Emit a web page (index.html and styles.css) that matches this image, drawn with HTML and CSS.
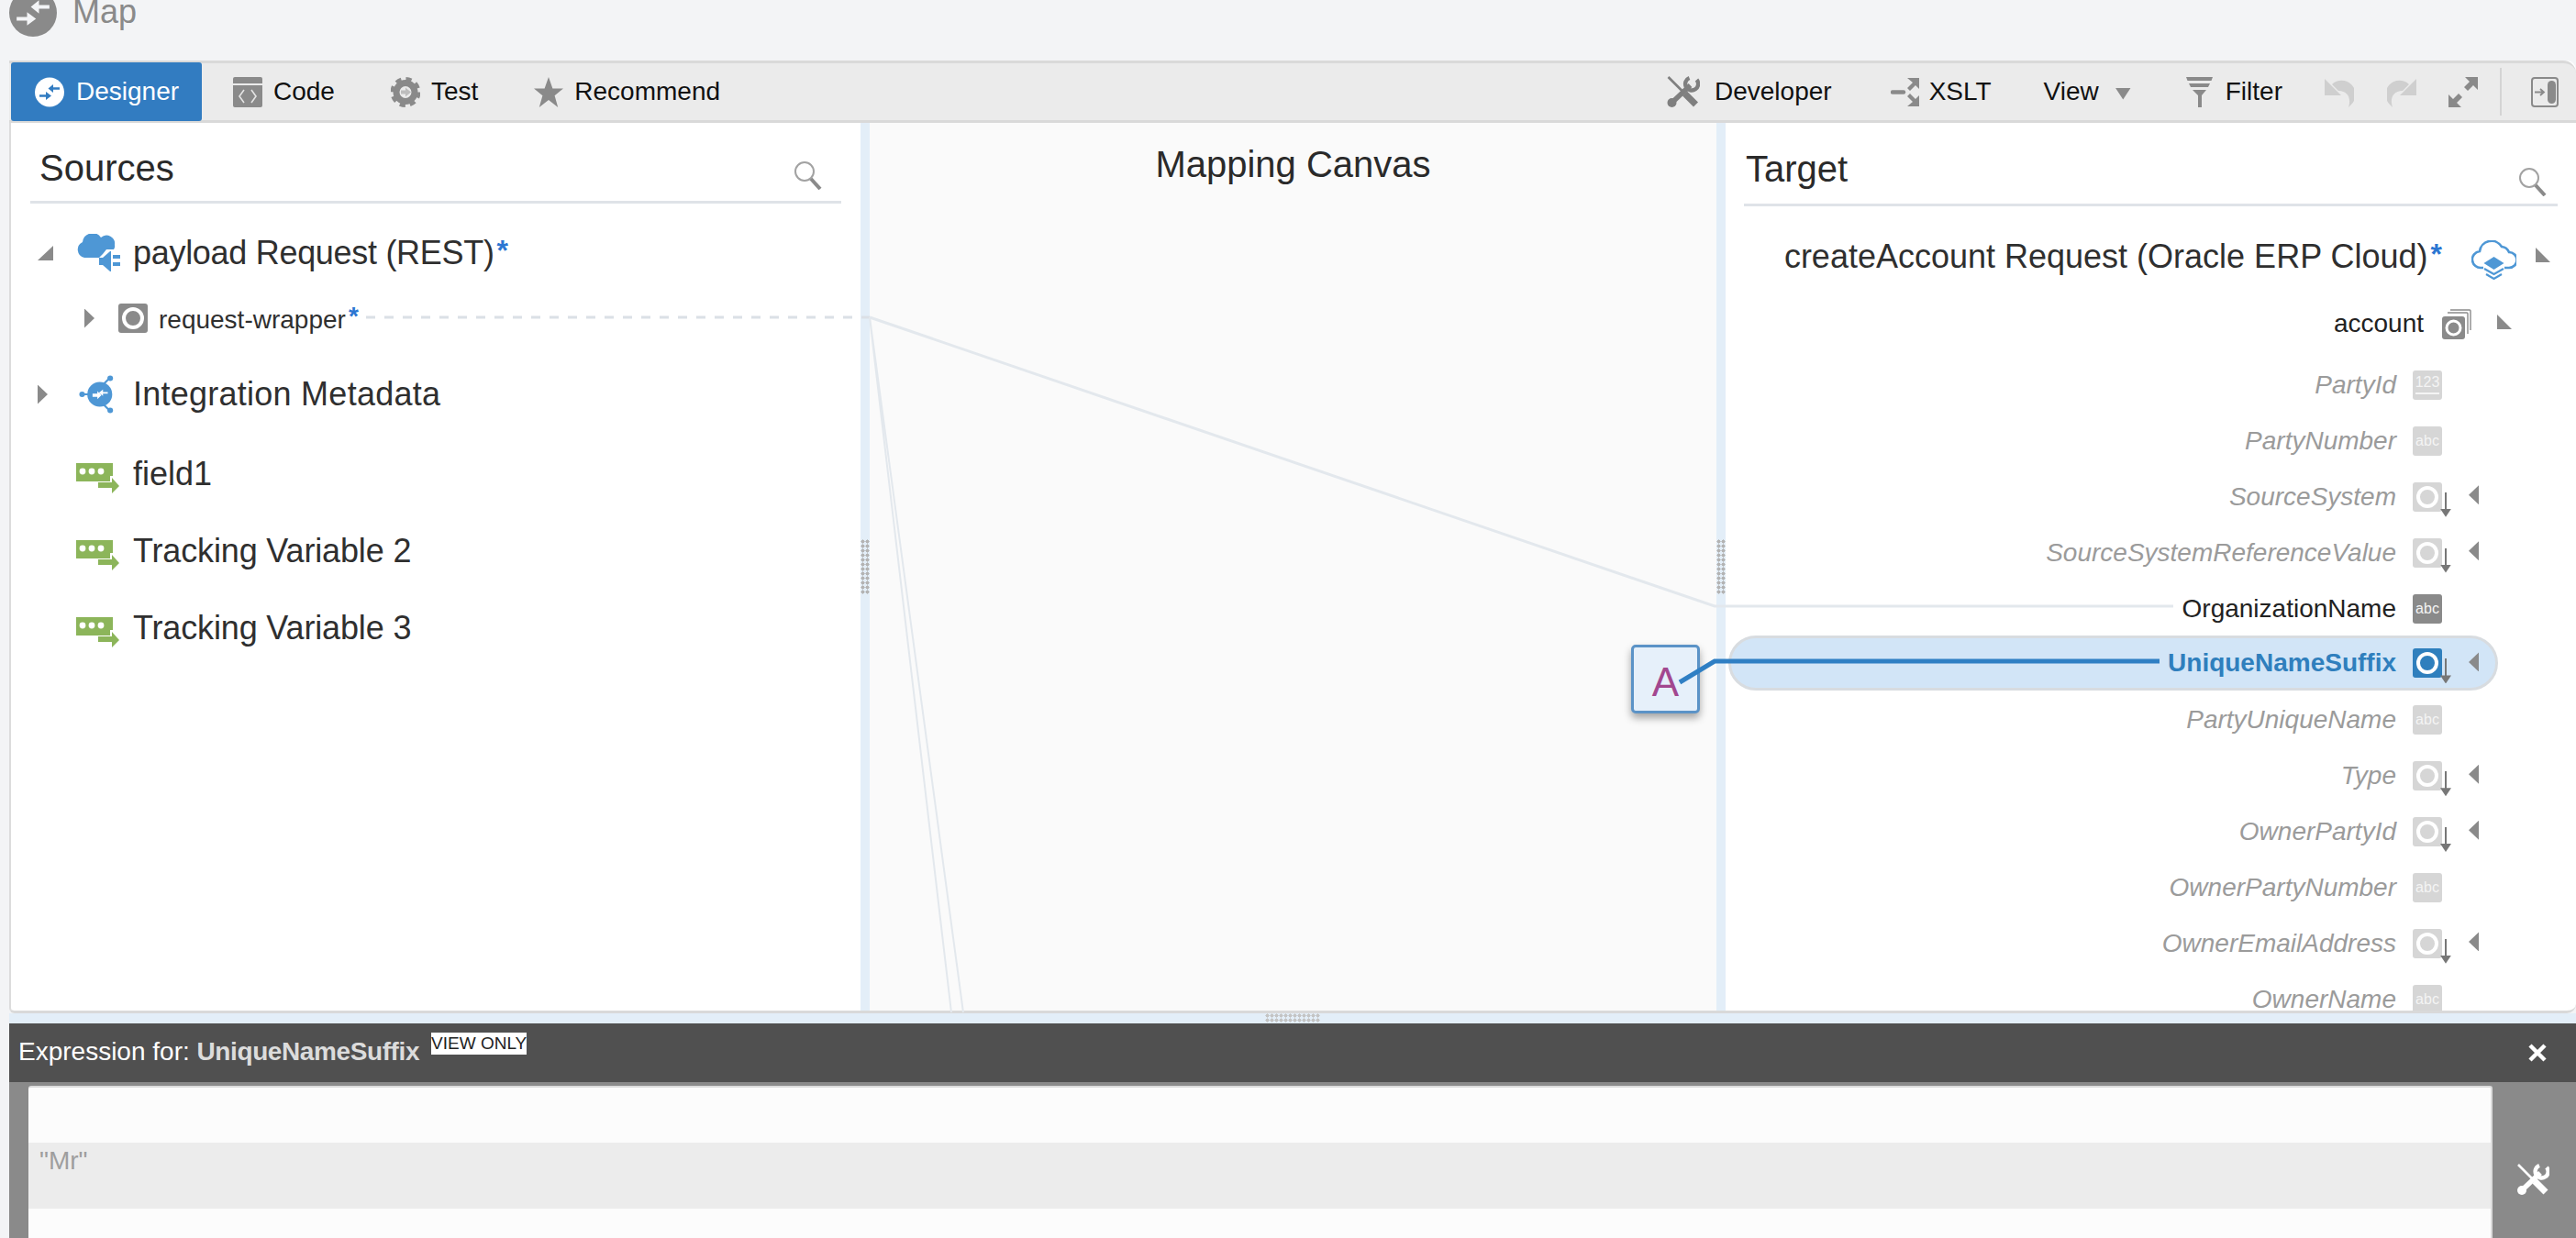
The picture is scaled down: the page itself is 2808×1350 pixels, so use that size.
FILE: index.html
```html
<!DOCTYPE html>
<html lang="en">
  <head>
    <meta charset="UTF-8" />
    <title>Map</title>
    <link rel="stylesheet" href="styles.css">
  </head>
  <body>
    <!-- shared icons -->
    <svg class="icon-defs" aria-hidden="true">
      <defs>
        <symbol id="ic-map" viewBox="0 0 32 32">
          <circle cx="16" cy="16" r="16" fill="currentColor" />
          <path class="ic-cut" d="M5 20h8M27 12h-8" fill="none" stroke-width="2.400" />
          <path class="ic-cut-fill" d="M12 15.500l6 4.500-6 4.500zM20 7.500v9L14.500 12z" />
        </symbol>
        <symbol id="ic-tools" viewBox="0 0 36 36">
          <path d="M2 2l18 18" stroke="currentColor" stroke-width="2.600" fill="none" />
          <path d="M20 20l12 12" stroke="currentColor" stroke-width="7" fill="none" />
          <path d="M26 11L7 29" stroke="currentColor" stroke-width="5.500" fill="none" />
          <circle cx="6" cy="30" r="5" fill="currentColor" />
          <path d="M33 5a7 7 0 1 1-8-2" stroke="currentColor" stroke-width="4.400" fill="none" />
        </symbol>
        <symbol id="ic-search" viewBox="0 0 32 32">
          <circle cx="12" cy="12" r="10" fill="none" stroke="#a2a2a2" stroke-width="2" />
          <path d="M19 20l10 11" stroke="#8a8a8a" stroke-width="4" />
        </symbol>
        <symbol id="ic-var" viewBox="0 0 48 33">
          <path d="M0 0h40v20H0z" fill="#8cb55a" />
          <circle cx="7" cy="9" r="3.400" fill="#fff" />
          <circle cx="17" cy="9" r="3.400" fill="#fff" />
          <circle cx="27" cy="9" r="3.400" fill="#fff" />
          <path d="M20 20h17v-6h3l8 11-8 8h-3v-6H20z" fill="#fff" />
          <path d="M24 21h15v-5l8 9-8 8v-6H24z" fill="#8cb55a" />
        </symbol>
      </defs>
    </svg>

    <div class="page">
      <header class="page-title">
        <svg class="title-icon"><use href="#ic-map" /></svg>
        <span>Map</span>
      </header>

      <main class="panel">
        <div class="toolbar">
          <div class="tb-tab">
            <svg class="tb-ic"><use href="#ic-map" /></svg>
            <span>Designer</span>
          </div>
          <div class="tb-item tb-code">
            <svg class="tb-ic" viewBox="0 0 32 33">
              <rect width="32" height="33" rx="2" fill="#8a8a8a" />
              <path d="M0 8h32" stroke="#ebebeb" stroke-width="2" />
              <path d="M12 14l-5 7 5 7M20 14l5 7-5 7" fill="none" stroke="#e4e4e4" stroke-width="1.600" />
            </svg>
            <span>Code</span>
          </div>
          <div class="tb-item tb-test">
            <svg class="tb-ic" viewBox="0 0 32 33">
              <circle cx="16" cy="16.500" r="10" fill="none" stroke="#8a8a8a" stroke-width="7" />
              <circle cx="16" cy="16.500" r="14" fill="none" stroke="#8a8a8a" stroke-width="5" stroke-dasharray="6 5" />
              <path d="M11 14.500h5v-3l6 5-6 5v-3h-5z" fill="#bdbdbd" />
            </svg>
            <span>Test</span>
          </div>
          <div class="tb-item tb-rec">
            <svg class="tb-ic" viewBox="0 0 32 33">
              <path d="M16 0l4.400 12.400H32l-9.400 7.800L26.200 33 16 25 5.800 33l3.600-12.800L0 12.400h11.600z" fill="#8a8a8a" />
            </svg>
            <span>Recommend</span>
          </div>

          <div class="tb-right">
            <div class="tb-item">
              <svg class="tb-ic-tools"><use href="#ic-tools" /></svg>
              <span>Developer</span>
            </div>
            <div class="tb-item tb-xslt">
              <svg class="tb-ic tb-ic-xslt" viewBox="0 0 31 33">
                <path d="M2 16.500h12" stroke="#8a8a8a" stroke-width="4.500" stroke-linecap="round" />
                <path d="M18 1h13v12l-4-4-6 6-3-3 6-6zM18 32h13V20l-4 4-6-6-3 3 6 6z" fill="#8a8a8a" />
              </svg>
              <span>XSLT</span>
            </div>
            <div class="tb-item tb-view">
              <span>View</span>
              <i class="view-caret"></i>
            </div>
            <div class="tb-item tb-filter">
              <svg class="tb-ic tb-ic-filter" viewBox="0 0 29 33">
                <path d="M0 0h29l-1.500 4H1.500zM3 7h23l-2 4H5zM7 14h15l-5 6v13h-4V20z" fill="#8a8a8a" />
              </svg>
              <span>Filter</span>
            </div>
            <svg class="tb-btn tb-undo" viewBox="0 0 32 33">
              <path d="M0 2v18h18z" fill="#cfcfcf" />
              <path d="M8 8a15 15 0 0 1 21 22l-3 3c3-9 0-18-11-18z" fill="#cfcfcf" />
            </svg>
            <svg class="tb-btn tb-redo" viewBox="0 0 32 33">
              <path d="M32 2v18H14z" fill="#cfcfcf" />
              <path d="M24 8A15 15 0 0 0 3 30l3 3c-3-9 0-18 11-18z" fill="#cfcfcf" />
            </svg>
            <svg class="tb-btn tb-expand" viewBox="0 0 32 33">
              <path d="M32 0v14l-5-5-6 6-4-4 6-6-5-5zM0 33V19l5 5 6-6 4 4-6 6 5 5z" fill="#8a8a8a" />
            </svg>
            <i class="tb-sep"></i>
            <svg class="tb-btn tb-panel" viewBox="0 0 30 33">
              <rect x="1" y="1" width="28" height="31" rx="3" fill="none" stroke="#8a8a8a" stroke-width="2" />
              <rect x="18" y="4" width="9" height="25" rx="4.500" fill="#8a8a8a" />
              <path d="M4 16.500h9M10 13l4 3.500-4 3.500" fill="none" stroke="#8a8a8a" stroke-width="1.800" />
            </svg>
          </div>
        </div>

        <div class="mapper">
          <section class="sources">
            <div class="pane-head">
              <h2>Sources</h2>
              <svg class="search-ic"><use href="#ic-search" /></svg>
            </div>
            <div class="tree">
              <div class="tree-row">
                <span class="caret-slot"><i class="caret caret-down-left"></i></span>
                <svg class="tree-ic" viewBox="0 0 48 42">
                  <path d="M9 26a9 9 0 0 1-2-17A11 11 0 0 1 27 4a9 9 0 0 1 15 8 6 6 0 0 1-1 5h-8l-4 5-4 4z" fill="#4e97d5" />
                  <path d="M25 26h4l8-7h1v22h-1l-8-7h-4z" fill="#4e97d5" />
                  <path d="M40 25h8M40 33h8" stroke="#4e97d5" stroke-width="4" />
                </svg>
                <span class="tree-label tight">payload Request (REST)<b class="star">*</b></span>
              </div>
              <div class="tree-row sub">
                <span class="caret-slot"><i class="caret caret-right"></i></span>
                <span class="node dark"><i class="ring"></i></span>
                <span class="tree-label small">request-wrapper<b class="star">*</b></span>
              </div>
              <div class="tree-row meta">
                <span class="caret-slot"><i class="caret caret-right"></i></span>
                <svg class="tree-ic" viewBox="0 0 48 48">
                  <path d="M5 24h10M30 12l10-10M30 36l10 10" stroke="#4e97d5" stroke-width="2.500" />
                  <circle cx="4" cy="24" r="3.500" fill="#4e97d5" />
                  <circle cx="39" cy="4" r="3.500" fill="#4e97d5" />
                  <circle cx="39" cy="44" r="3.500" fill="#4e97d5" />
                  <circle cx="26" cy="24" r="15.500" fill="#4e97d5" />
                  <path d="M17 23h6v-3l5 5-5 5v-3h-6zM36 21h-6v-3l-5 4 5 4v-3h6z" fill="#fff" />
                </svg>
                <span class="tree-label wide">Integration Metadata</span>
              </div>
              <div class="tree-row">
                <span class="caret-slot"></span>
                <svg class="tree-ic var-ic"><use href="#ic-var" /></svg>
                <span class="tree-label">field1</span>
              </div>
              <div class="tree-row">
                <span class="caret-slot"></span>
                <svg class="tree-ic var-ic"><use href="#ic-var" /></svg>
                <span class="tree-label tracking">Tracking Variable 2</span>
              </div>
              <div class="tree-row">
                <span class="caret-slot"></span>
                <svg class="tree-ic var-ic"><use href="#ic-var" /></svg>
                <span class="tree-label tracking">Tracking Variable 3</span>
              </div>
            </div>
          </section>

          <div class="splitter"><i class="grip"></i></div>

          <section class="canvas">
            <h2>Mapping Canvas</h2>
          </section>

          <div class="splitter"><i class="grip"></i></div>

          <section class="target">
            <div class="pane-head target-head">
              <h2>Target</h2>
              <svg class="search-ic"><use href="#ic-search" /></svg>
            </div>
            <div class="target-root">
              <span class="tree-label">createAccount Request (Oracle ERP Cloud)<b class="star">*</b></span>
              <svg class="root-ic" viewBox="0 0 49 43">
                <path d="M13 30H11a9 9 0 0 1-2-18 13 13 0 0 1 24-5 10 10 0 0 1 8 6 8 8 0 0 1 0 17h-5" fill="none" stroke="#4e97d5" stroke-width="2.600" />
                <path d="M24.500 18l11 7-11 7-11-7z" fill="#4e97d5" />
                <path d="M14 31l10.500 6 10.500-6M16 37l8.500 5 8.500-5" fill="none" stroke="#4e97d5" stroke-width="2.200" />
              </svg>
              <i class="caret caret-down-right"></i>
            </div>
            <div class="target-group">
              <span class="tree-label small">account</span>
              <span class="stack-ic">
                <svg viewBox="0 0 32 33" width="32" height="33">
                  <path d="M9 1h21a1 1 0 0 1 1 1v21M6 4h21a1 1 0 0 1 1 1v22" fill="none" stroke="#8a8a8a" stroke-width="1.400" />
                  <rect y="8" width="25" height="25" rx="3" fill="#8a8a8a" />
                  <circle cx="12.500" cy="20.500" r="7.500" fill="none" stroke="#fff" stroke-width="3" />
                </svg>
              </span>
              <i class="caret caret-down-right"></i>
            </div>
            <div class="fields">
              <div class="field">
                <span class="field-name">PartyId</span>
                <span class="node"><span class="num">123</span></span>
              </div>
              <div class="field">
                <span class="field-name">PartyNumber</span>
                <span class="node">abc</span>
              </div>
              <div class="field">
                <span class="field-name">SourceSystem</span>
                <span class="node"><i class="ring"></i><i class="down"></i></span>
                <i class="caret caret-left"></i>
              </div>
              <div class="field">
                <span class="field-name">SourceSystemReferenceValue</span>
                <span class="node"><i class="ring"></i><i class="down"></i></span>
                <i class="caret caret-left"></i>
              </div>
              <div class="field mapped">
                <span class="field-name">OrganizationName</span>
                <span class="node dark">abc</span>
              </div>
              <div class="field selected">
                <span class="field-name">UniqueNameSuffix</span>
                <span class="node blue"><i class="ring"></i><i class="down"></i></span>
                <i class="caret caret-left"></i>
              </div>
              <div class="field">
                <span class="field-name">PartyUniqueName</span>
                <span class="node">abc</span>
              </div>
              <div class="field">
                <span class="field-name">Type</span>
                <span class="node"><i class="ring"></i><i class="down"></i></span>
                <i class="caret caret-left"></i>
              </div>
              <div class="field">
                <span class="field-name">OwnerPartyId</span>
                <span class="node"><i class="ring"></i><i class="down"></i></span>
                <i class="caret caret-left"></i>
              </div>
              <div class="field">
                <span class="field-name">OwnerPartyNumber</span>
                <span class="node">abc</span>
              </div>
              <div class="field">
                <span class="field-name">OwnerEmailAddress</span>
                <span class="node"><i class="ring"></i><i class="down"></i></span>
                <i class="caret caret-left"></i>
              </div>
              <div class="field">
                <span class="field-name">OwnerName</span>
                <span class="node">abc</span>
              </div>
            </div>
          </section>
        </div>
      </main>

      <div class="h-splitter"><i class="grip-h"></i></div>

      <section class="expr">
        <div class="expr-head">
          <span class="expr-title">Expression for: <b>UniqueNameSuffix</b></span>
          <span class="view-only">VIEW ONLY</span>
          <svg class="expr-close" viewBox="0 0 20 20">
            <path d="M2 2l16 16M18 2L2 18" stroke="#fff" stroke-width="4.500" />
          </svg>
        </div>
        <div class="expr-body">
          <div class="editor">
            <div class="editor-line">"Mr"</div>
          </div>
          <div class="expr-side">
            <svg class="expr-tools"><use href="#ic-tools" /></svg>
          </div>
        </div>
      </section>

      <!-- mapping node and wires lie over the panes -->
      <div class="fn-node">A</div>
      <svg class="wires" viewBox="0 0 2808 1350">
        <path class="wire-dash" d="M399 346H948" />
        <path class="wire" d="M948 346L1869 661H2369" />
        <path class="wire wire-thin" d="M948 346L1037 1104M948 346L1050 1104" />
        <path class="wire-on" d="M1831 744L1869 721H2354" />
      </svg>
    </div>
  </body>
</html>
```

FILE: styles.css
```css
* {
  box-sizing: border-box;
}

html,
body {
  margin: 0;
  height: 100%;
  overflow: hidden;
}

body {
  background-color: #f3f4f6;
  color: #2f2f2f;
  font-family: "Liberation Sans", Arial, sans-serif;
}

h2 {
  margin: 0;
  font-size: 40px;
  font-weight: normal;
}

i {
  display: block;
}

.icon-defs {
  position: absolute;
  width: 0;
  height: 0;
}

.page {
  position: relative;
  display: flex;
  flex-direction: column;
  height: 1350px;
}

/* Title */
.page-title {
  height: 66px;
  flex: none;
  display: flex;
  align-items: flex-start;
  padding-left: 10px;
  color: #8a8a8a;
  font-size: 36px;
  overflow: hidden;
}

.title-icon {
  width: 52px;
  height: 52px;
  margin-top: -12px;
  margin-right: 17px;
  color: #8a8a8a;
  --cut: #f3f4f6;
}

.page-title span {
  margin-top: -12px;
  line-height: 50px;
}

.ic-cut {
  stroke: var(--cut);
}

.ic-cut-fill {
  fill: var(--cut);
}

/* Panel */
.panel {
  height: 1039px;
  flex: none;
  margin-left: 10px;
  display: flex;
  flex-direction: column;
  background-color: #fff;
  border-left: 2px solid #dcdcdc;
  border-bottom: 3px solid #d9d9d9;
  border-radius: 0 10px 10px 6px;
}

.toolbar {
  height: 68px;
  flex: none;
  display: flex;
  align-items: center;
  margin-left: -2px;
  padding-left: 2px;
  background-color: #ebebeb;
  border-top: 3px solid #d9d9d9;
  border-bottom: 3px solid #d9d9d9;
  border-top-right-radius: 14px;
  color: #111;
  font-size: 28px;
}

.tb-tab {
  width: 208px;
  height: 64px;
  display: flex;
  align-items: center;
  gap: 13px;
  padding-left: 26px;
  background-color: #327cc1;
  border-radius: 3px;
  color: #fff;
  --cut: #327cc1;
}

.tb-ic {
  width: 32px;
  height: 33px;
  flex: none;
}

.tb-item {
  display: flex;
  align-items: center;
  gap: 12px;
}

.tb-code {
  margin-left: 34px;
}

.tb-test {
  margin-left: 61px;
}

.tb-rec {
  margin-left: 61px;
}

.tb-right {
  margin-left: auto;
  padding-right: 19px;
  display: flex;
  align-items: center;
}

.tb-ic-tools {
  width: 37px;
  height: 36px;
  margin-right: 4px;
  color: #7f7f7f;
}

.tb-xslt {
  margin-left: 64px;
  gap: 11px;
}

.tb-ic-xslt {
  width: 31px;
}

.tb-view {
  margin-left: 57px;
  gap: 18px;
}

.view-caret {
  width: 17px;
  height: 13px;
  margin-top: 4px;
  background-color: #8a8a8a;
  clip-path: polygon(0 0, 100% 0, 50% 100%);
}

.tb-filter {
  margin-left: 60px;
  gap: 14px;
}

.tb-ic-filter {
  width: 29px;
}

.tb-btn {
  width: 32px;
  height: 33px;
  flex: none;
}

.tb-undo {
  margin-left: 46px;
}

.tb-redo {
  margin-left: 36px;
}

.tb-expand {
  margin-left: 35px;
}

.tb-sep {
  width: 2px;
  height: 52px;
  margin-left: 24px;
  background-color: #d4d4d4;
}

.tb-panel {
  width: 30px;
  margin-left: 32px;
}

.mapper {
  flex: 1;
  min-height: 0;
  display: flex;
}

/* Panes */
.pane-head {
  display: flex;
  align-items: flex-start;
  justify-content: space-between;
  height: 88px;
  margin: 0 21px;
  padding: 26px 20px 0 10px;
  border-bottom: 3px solid #dfe3e8;
  line-height: 46px;
  color: #2a2a2a;
}

.search-ic {
  width: 32px;
  height: 32px;
  margin-top: 15px;
}

.sources {
  width: 926px;
  flex: none;
  overflow: hidden;
}

.tree-row {
  display: flex;
  align-items: center;
  height: 60px;
  margin-top: 24px;
  padding-left: 29px;
}

.caret-slot {
  width: 42px;
  flex: none;
}

.tree-ic {
  width: 48px;
  height: 42px;
  flex: none;
  margin-right: 14px;
}

.var-ic {
  height: 33px;
  margin-top: 8px;
}

.tree-label {
  font-size: 36px;
  white-space: nowrap;
}

.tree-label.small {
  font-size: 28px;
}

.tree-label.tight {
  letter-spacing: -0.3px;
}

.tree-label.wide {
  letter-spacing: 0.25px;
}

.tree-label.tracking {
  letter-spacing: -0.15px;
}

.star {
  color: #2b76d2;
  font-size: 32px;
  margin-left: 3px;
  vertical-align: 4px;
}

.small .star {
  font-size: 28px;
}

.tree-row.sub {
  margin-top: 11px;
  padding-left: 80px;
}

.tree-row.sub .caret-slot {
  width: 37px;
}

.tree-row.sub .tree-label {
  margin-left: 12px;
}

.tree-row.meta {
  margin-top: 23px;
}

.tree-row.meta + .tree-row {
  margin-top: 27px;
}

/* Carets */
.caret {
  flex: none;
  background-color: #8a8a8a;
}

.caret-right {
  width: 11px;
  height: 21px;
  clip-path: polygon(0 0, 100% 50%, 0 100%);
}

.caret-left {
  width: 11px;
  height: 21px;
  clip-path: polygon(100% 0, 0 50%, 100% 100%);
}

.caret-down-left {
  width: 17px;
  height: 16px;
  clip-path: polygon(100% 0, 100% 100%, 0 100%);
}

.caret-down-right {
  width: 16px;
  height: 16px;
  clip-path: polygon(0 0, 100% 100%, 0 100%);
}

/* Type badges */
.node {
  position: relative;
  width: 32px;
  height: 32px;
  flex: none;
  display: flex;
  align-items: center;
  justify-content: center;
  background-color: #d6d6d6;
  border-radius: 3px;
  color: #f4f4f4;
  font-size: 16px;
  font-style: normal;
  font-weight: normal;
}

.node.dark {
  background-color: #8a8a8a;
}

.node.blue {
  background-color: #2f7fbd;
}

.num {
  padding-bottom: 3px;
  border-bottom: 2px solid #f4f4f4;
  line-height: 16px;
}

.ring {
  width: 24px;
  height: 24px;
  border: 4px solid #fff;
  border-radius: 50%;
}

.down {
  position: absolute;
  left: 35px;
  top: 11px;
  width: 2px;
  height: 20px;
  background-color: #777;
}

.down::after {
  content: "";
  position: absolute;
  left: -5px;
  top: 18px;
  width: 12px;
  height: 9px;
  background-color: #777;
  clip-path: polygon(0 0, 100% 0, 50% 100%);
}

/* Canvas */
.splitter {
  position: relative;
  width: 10px;
  flex: none;
  display: flex;
  align-items: center;
  background-color: #e3eef8;
}

.grip {
  width: 10px;
  height: 60px;
  background-image: radial-gradient(#b4b4b4 55%, transparent 60%);
  background-size: 5px 5px;
}

.canvas {
  width: 923px;
  flex: none;
  background-color: #fafafa;
  text-align: center;
  color: #2a2a2a;
}

.canvas h2 {
  padding-top: 22px;
  line-height: 46px;
}

/* Target */
.target {
  flex: 1;
  min-width: 0;
  overflow: hidden;
}

.target-head {
  height: 91px;
  margin: 0 20px;
  padding: 27px 8px 0 2px;
}

.target-head .search-ic {
  margin-top: 21px;
  margin-right: 3px;
}

.target-root {
  display: flex;
  align-items: center;
  justify-content: flex-end;
  height: 60px;
  margin-top: 25px;
  padding-right: 28px;
}

.root-ic {
  width: 49px;
  height: 43px;
  margin: 6px 21px 0 32px;
}

.target-root .caret {
  margin-top: -4px;
}

.target-group {
  display: flex;
  align-items: center;
  justify-content: flex-end;
  height: 60px;
  margin-top: 13px;
  padding-right: 70px;
  color: #222;
}

.stack-ic {
  width: 32px;
  height: 33px;
  margin: 0 28px 0 20px;
}

.target-group .caret {
  margin-top: -4px;
}

.fields {
  margin-top: 6.500px;
}

.field {
  position: relative;
  display: flex;
  align-items: center;
  justify-content: flex-end;
  height: 60.900px;
  margin: 0 85px 0 5px;
  padding-right: 61px;
  font-size: 28px;
}

.field-name {
  margin-right: 18px;
  color: #9b9b9b;
  font-style: italic;
  white-space: nowrap;
}

.field .caret {
  position: absolute;
  right: 21px;
  top: 18px;
}

.field.mapped .field-name {
  color: #222;
  font-style: normal;
}

.field.selected {
  height: 60px;
  margin-top: -0.500px;
  margin-bottom: 1.400px;
  margin-left: 3px;
  background-color: #d2e5f7;
  border: 3px solid #d8dce0;
  border-radius: 30px;
  padding-right: 58px;
}

.field.selected .field-name {
  color: #2f7fbd;
  font-style: normal;
  font-weight: bold;
}

.field.selected .caret {
  right: 18px;
  top: 15px;
}

/* Expression builder */
.h-splitter {
  height: 11px;
  flex: none;
  margin-left: 10px;
  display: flex;
  justify-content: center;
  background-color: #e3eef8;
}

.grip-h {
  width: 60px;
  height: 10px;
  background-image: radial-gradient(#c4c4c4 55%, transparent 60%);
  background-size: 5px 5px;
}

.expr {
  flex: 1;
  min-height: 0;
  margin-left: 10px;
  display: flex;
  flex-direction: column;
}

.expr-head {
  position: relative;
  height: 64px;
  flex: none;
  display: flex;
  align-items: flex-start;
  padding-left: 10px;
  background-color: #505050;
  color: #fff;
  font-size: 28px;
}

.expr-title {
  margin-top: 14px;
  line-height: 34px;
}

.expr-title b {
  color: #dcdcdc;
  letter-spacing: -0.4px;
}

.view-only {
  margin-top: 10px;
  margin-left: 13px;
  height: 24px;
  background-color: #fff;
  color: #222;
  font-size: 19px;
  line-height: 24px;
}

.expr-close {
  margin-left: auto;
  margin-right: 32px;
  margin-top: 22px;
  width: 20px;
  height: 20px;
}

.expr-body {
  flex: 1;
  min-height: 0;
  display: flex;
  padding: 4px 0 0 21px;
  background-color: #8a8a8a;
}

.editor {
  flex: 1;
  padding-top: 60px;
  background-color: #fcfcfc;
  border-top-right-radius: 3px;
  border-top-left-radius: 3px;
  border-right: 2px solid #dcdcdc;
  border-top: 2px solid #dcdcdc;
}

.editor-line {
  height: 72px;
  padding: 2px 0 0 12px;
  background-color: #ececec;
  color: #9e9e9e;
  font-size: 28px;
  line-height: 36px;
}

.expr-side {
  width: 91px;
  flex: none;
  display: flex;
  align-items: flex-start;
  justify-content: center;
}

.expr-tools {
  width: 36px;
  height: 36px;
  margin-top: 84px;
  margin-right: 4px;
  color: #fff;
}

/* Overlay on the canvas */
.fn-node {
  position: absolute;
  left: 1778px;
  top: 703px;
  z-index: 1;
  width: 75px;
  height: 75px;
  padding-top: 13px;
  background-color: #e6f0fa;
  border: 3px solid #5b93c7;
  border-radius: 5px;
  box-shadow: 0 5px 9px rgba(0, 0, 0, 0.35);
  color: #a2478f;
  font-size: 44px;
  line-height: 50px;
  text-align: center;
}

.wires {
  position: absolute;
  left: 0;
  top: 0;
  z-index: 2;
  width: 2808px;
  height: 1350px;
  pointer-events: none;
  fill: none;
}

.wire {
  stroke: #e3e8ed;
  stroke-width: 3;
}

.wire-thin {
  stroke-width: 2;
}

.wire-dash {
  stroke: #dbe0e6;
  stroke-width: 3;
  stroke-dasharray: 10 10;
}

.wire-on {
  stroke: #2f7fc4;
  stroke-width: 5;
}
```
